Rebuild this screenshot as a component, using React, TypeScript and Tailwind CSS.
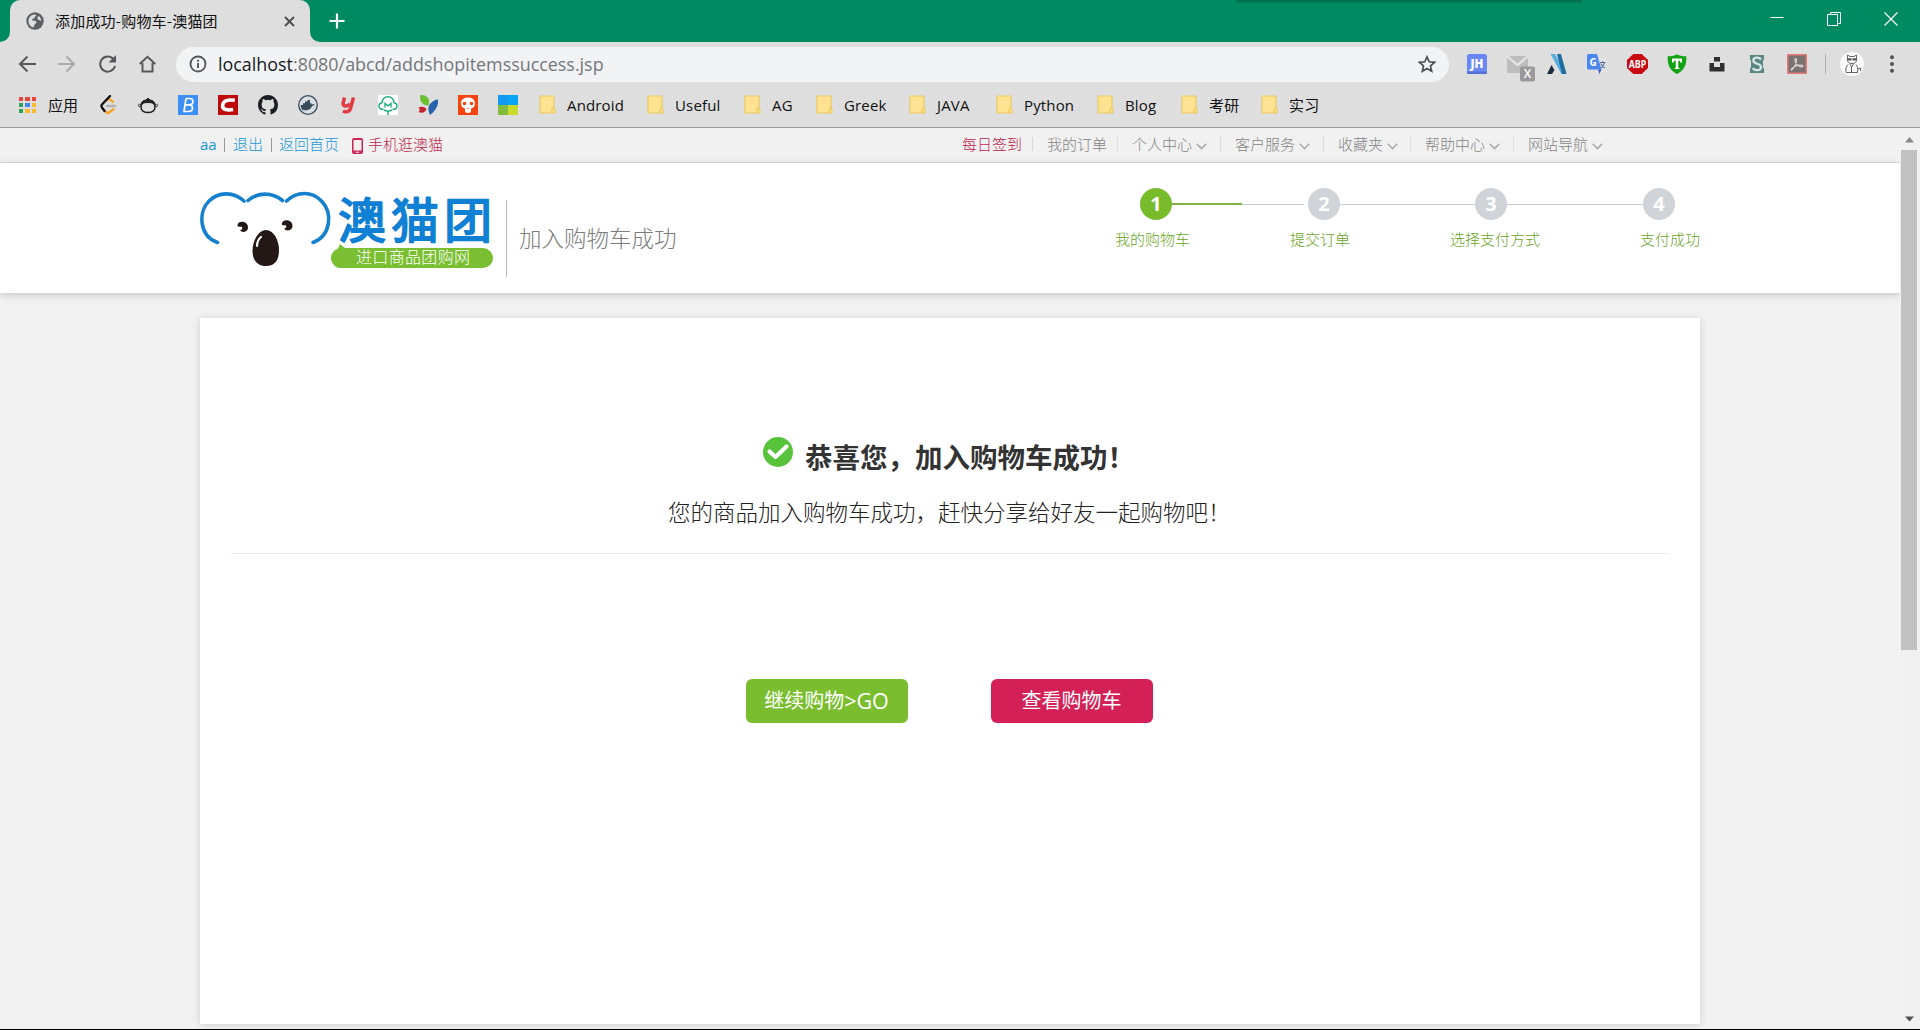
import React from "react";

const cjk = "font-['Noto_Sans_CJK_SC',sans-serif]";
const ui = "font-['Open_Sans','Noto_Sans_CJK_SC',sans-serif]";

function TabStrip() {
  return (
    <div className="relative flex h-[42px] w-full shrink-0 bg-[#008a62]">
      <div className="absolute left-[1236px] top-0 h-[4px] w-[346px] bg-gradient-to-b from-[#006c4d] to-[#008a62]" />
      <svg className="w-[10px] self-end" height="10" viewBox="0 0 10 10"><path d="M10 0V10H0A10 10 0 0 0 10 0Z" fill="#dedede" /></svg>
      <div className="flex w-[300px] items-center rounded-t-[10px] bg-[#dedede] pl-4">
        <svg width="18" height="18" viewBox="0 0 18 18">
          <circle cx="9" cy="9" r="8.7" fill="#5c6166" />
          <path d="M8.500 2.500c2 .2 2 1.200.8 1.900-1 .6-.6 1.800-1.800 2.200-1 .4-1.700.7-1.200 1.600.8 1 3.300-.2 4 1.400.5 1.600-1.100 2-1.700 3-.6 1-.6 2.400-1.500 2.900C4 14.500 2.300 11.500 2.500 8.500 3 5 5.500 2.700 8.500 2.500Z" fill="#dedede" />
          <path d="M12.300 4c1.700 1 2.900 2.600 3.100 4.500-.8.400-1.600-.2-2.500-.4-1.600-.5-2-2.500-.6-4.100Z" fill="#dedede" />
        </svg>
        <span className={`${cjk} ml-[11px] w-[229px] whitespace-nowrap text-[15px] leading-5 tracking-[0.2px] text-[#111]`}>添加成功-购物车-澳猫团</span>
        <svg width="11" height="11" viewBox="0 0 11 11" stroke="#4c4f52" strokeWidth="1.900"><path d="M1 1l9 9M10 1l-9 9" /></svg>
      </div>
      <svg className="w-[10px] self-end" height="10" viewBox="0 0 10 10"><path d="M0 0V10H10A10 10 0 0 1 0 0Z" fill="#dedede" /></svg>
      <svg className="ml-[9px] mt-[13px]" width="16" height="16" viewBox="0 0 16 16" stroke="#fff" strokeWidth="2.200"><path d="M8 .5v15M.5 8h15" /></svg>
      <div className="ml-auto flex gap-[43px] pr-[22px] pt-[12px]">
        <svg width="14" height="14" viewBox="0 0 14 14" stroke="#fff"><path d="M.5 5.500h13" /></svg>
        <svg width="14" height="14" viewBox="0 0 14 14" stroke="#fff" fill="none"><path d="M.5 2.500h10v11H.5zM3.500 2.500v-2h10v11h-3" /></svg>
        <svg width="14" height="14" viewBox="0 0 14 14" stroke="#fff" strokeWidth="1.200"><path d="M.5 .5l13 13M13.500 .5l-13 13" /></svg>
      </div>
    </div>
  );
}

function ExtensionIcons() {
  return (
    <div className="flex items-center gap-5">
      <svg width="20" height="20" viewBox="0 0 20 20"><rect width="20" height="20" rx="2.500" fill="#6b87f5" /><rect y="17.500" width="20" height="2.500" rx="1.200" fill="#556fd6" /><text x="10" y="14.200" textAnchor="middle" fontSize="11.500" fontWeight="800" fill="#fff" fontFamily="Open Sans">JH</text></svg>
      <svg className="-my-2 -mr-[8px]" width="28" height="36" viewBox="0 0 28 36"><path d="M0 10h21v17H0z" fill="#bdbdbd" /><path d="M0 10l10.500 9L21 10" stroke="#e6e6e6" strokeWidth="2.200" fill="none" /><rect x="13" y="20.500" width="15" height="15" rx="2" fill="#999" /><text x="20.500" y="32" textAnchor="middle" fontSize="12" fontWeight="600" fill="#fff" fontFamily="Open Sans">X</text></svg>
      <svg width="20" height="20" viewBox="0 0 20 20"><path d="M3.500 0H8l11 20h-4.500z" fill="#58ace0" /><path d="M10 0h4l5.500 20h-4.500z" fill="#1f6e9e" /><path d="M4.500 11l3 5L5 20H0z" fill="#1b2c40" /></svg>
      <svg width="20" height="20" viewBox="0 0 20 20"><path d="M9 4h10v15h-7z" fill="#e4e4e4" /><path d="M1.500 0H10l4.500 15.500H1.500A1.500 1.500 0 0 1 0 14V1.500A1.500 1.500 0 0 1 1.500 0Z" fill="#4a86ee" /><path d="M11 15.500h3.500L12.500 20z" fill="#2c5cb8" /><text x="6" y="11.500" textAnchor="middle" fontSize="10" fontWeight="700" fill="#fff" fontFamily="Open Sans">G</text><path d="M13 8.500h5.500M15.700 7v1.500M17.500 9c-.4 2.500-2 4-3.500 5M14 9.500c.6 2 2 3.500 4 4.500" stroke="#5f7391" strokeWidth="1.200" fill="none" /></svg>
      <svg width="21" height="20" viewBox="0 0 21 20"><path d="M6.300 0h8.400L21 6v8l-6.300 6H6.300L0 14V6z" fill="#c90a10" /><text x="1.700" y="13.900" fontSize="10.500" fontWeight="700" fill="#fff" fontFamily="Open Sans" textLength="17.600" lengthAdjust="spacingAndGlyphs">ABP</text></svg>
      <svg className="-ml-[1px]" width="20" height="20" viewBox="0 0 20 20"><path d="M10 .5c3 1.400 6 1.800 9.300 1.800C19.800 10 17.500 16.500 10 20 2.500 16.500.2 10 .7 2.300 4 2.300 7 1.900 10 .5Z" fill="#12a312" /><path d="M5 4.500h10v4h-1.500l-.7-1.700h-1.600v6.700l1.200.5v1H7.600v-1l1.200-.5V6.800H7.200L6.500 8.500H5z" fill="#fff" /></svg>
      <svg width="20" height="20" viewBox="0 0 20 20" fill="#2c2e30"><path d="M7 3h6v4.500H7zM2.500 9H7v4h6V9h4.500v8.500h-15z" /></svg>
      <svg width="20" height="20" viewBox="0 0 20 20"><path d="M3 1h14v5h-1v8h1v5H3v-5h1V6H3z" fill="#5b8783" /><path d="M14 5.500C13 4 11.800 3.700 10 3.700c-2.200 0-3.700 1-3.700 2.800C6.300 10.500 14 9 14 13c0 2-1.700 3.200-4 3.200-1.900 0-3.400-.6-4.300-2" stroke="#d5e5e3" strokeWidth="2.300" fill="none" /></svg>
      <svg width="20" height="20" viewBox="0 0 20 20"><rect x=".75" y=".75" width="18.500" height="18.500" fill="#7a726f" stroke="#df7a78" strokeWidth="1.500" /><path d="M4.500 16c2-1 4.500-5.500 5-9 .2-3-2-3-1.600-.5.600 3.500 4 6.500 7.200 6.300 1.500-.3.800-1.600-1-1.600-3.500 0-7 1.500-9 3.300-1 1-.9 1.700-.6 1.500Z" fill="none" stroke="#dad5d3" strokeWidth="1.200" /></svg>
    </div>
  );
}

function Toolbar() {
  const nav = { fill: "none", stroke: "#55585c", strokeWidth: 2 };
  return (
    <div className="flex h-[44px] w-full shrink-0 items-center bg-[#dedede] pl-[18px]">
      <svg className="mr-[22px]" width="18" height="18" viewBox="0 0 18 18" {...nav}><path d="M18 9H2M9.500 1.500L2 9l7.500 7.500" /></svg>
      <svg className="mr-[22px]" width="18" height="18" viewBox="0 0 18 18" {...nav} stroke="#a9abad"><path d="M0 9h16M8.500 1.500L16 9l-7.500 7.500" /></svg>
      <svg className="mr-[22px]" width="19" height="18" viewBox="0 0 19 18" {...nav}><path d="M15.500 4.300A7.500 7.500 0 1 0 17 11" /><path d="M18 0v7.500h-7.500z" fill="#55585c" stroke="none" /></svg>
      <svg className="mr-[20px]" width="17" height="18" viewBox="0 0 17 18" {...nav}><path d="M3.500 8v8.500h10V8M.7 9L8.500 1.800 16.300 9" /></svg>
      <div className="flex h-[35px] w-[1273px] shrink-0 items-center rounded-full bg-[#f1f3f4] pl-[13px]">
        <svg width="18" height="18" viewBox="0 0 18 18" fill="none" stroke="#55585c" strokeWidth="1.900"><circle cx="9" cy="9" r="7.500" /><path d="M9 8v5M9 4.800v1.900" /></svg>
        <span className={`${ui} ml-[11px] w-[1200px] whitespace-nowrap text-[17.900px] leading-6 text-[#74777b]`}><span className="text-[#17191c]">localhost</span>:8080/abcd/addshopitemssuccess.jsp</span>
        <svg width="18" height="18" viewBox="0 0 18 18" fill="none" stroke="#4d5054" strokeWidth="1.700"><path d="M9 1.800l2.200 5 5.400.5-4.100 3.600 1.200 5.300L9 13.400l-4.700 2.800 1.200-5.300L1.400 7.300l5.400-.5z" /></svg>
      </div>
      <div className="ml-[18px]"><ExtensionIcons /></div>
      <div className="ml-[18px] h-[20px] w-px bg-[#b0b0b0]" />
      <svg className="ml-[14px]" width="24" height="24" viewBox="0 0 24 24"><circle cx="12" cy="12" r="12" fill="#fafafa" /><path d="M7.500 7V3l2.500 1.500h4L16.500 3v4c.5 3-1.500 4.500-4.500 4.500S7 10 7.500 7ZM8 12.500c-2 2-2.500 4.500-2 8M16 12.500c1.500 1.500 2 4 1.500 8M10 12l1.500 3L13.500 12M11.500 15v5.500M6 20.500h12M18 17l2.500-1v3" stroke="#666" strokeWidth="1" fill="none" /><path d="M8 6.300h3.500v2.200H8zM12.500 6.300H16v2.200h-3.500z" fill="#555" /></svg>
      <svg className="ml-[26px]" width="4" height="18" viewBox="0 0 4 18" fill="#4f5256"><circle cx="2" cy="2.300" r="2" /><circle cx="2" cy="9" r="2" /><circle cx="2" cy="15.700" r="2" /></svg>
    </div>
  );
}

const folders = [
  { name: "Android", w: "w-[108px]" },
  { name: "Useful", w: "w-[97px]" },
  { name: "AG", w: "w-[72px]" },
  { name: "Greek", w: "w-[93px]" },
  { name: "JAVA", w: "w-[87px]" },
  { name: "Python", w: "w-[101px]" },
  { name: "Blog", w: "w-[84px]" },
  { name: "考研", w: "w-[80px]" },
  { name: "实习", w: "w-[80px]" },
];

const dots = ["#e8453c", "#e8453c", "#e8453c", "#2fa355", "#4385f4", "#f9b928", "#2fa355", "#f9b928", "#f9b928"];

function BookmarkBar() {
  return (
    <div className="flex h-[42px] w-full shrink-0 items-center border-b border-[#9b9b9b] bg-[#dedede] pb-[3px] pl-[19px]">
      <div className="grid w-[17px] grid-cols-3 gap-[2px]">
        {dots.map((c, i) => <span key={i} className="h-[4.300px] w-[4.300px]" style={{ background: c }} />)}
      </div>
      <span className={`${cjk} ml-[12px] w-[50px] text-[15px] leading-5 text-[#111]`}>应用</span>
      <div className="flex w-[442px] gap-5">
        <svg width="20" height="20" viewBox="0 0 20 20" fill="none" strokeWidth="2.300" strokeLinecap="round"><path d="M8 5.500l3-1.700 4 3M6 15l4 3.300 5.500-4" stroke="#f5a623" /><path d="M9 11h8" stroke="#b3b3b3" /><path d="M12 1L4 9.500c-.8 1-.8 2 0 3L6.500 16" stroke="#111" /></svg>
        <svg width="20" height="20" viewBox="0 0 20 20" fill="none" stroke="#222"><path d="M3 12c0-3.500 3-5.500 7-5.500s7 2 7 5.500-3 5.500-7 5.500-7-2-7-5.500Z" strokeWidth="1.500" /><path d="M3 9c.5-2.500 3-4 5-4l2-2 2 2c2 0 4.500 1.500 5 4-4-2-10-2-14 0Z" fill="#222" /><circle cx="1.700" cy="10.500" r="1.200" /><circle cx="18.300" cy="10.500" r="1.200" /></svg>
        <svg width="20" height="20" viewBox="0 0 20 20"><path fill="#3d8ff5" d="M0 0h20v20H0z" /><path d="M8 3.500L6 16.500h4c3 0 4.500-1.500 4.500-3.500S13 9.800 11 9.800c2.500 0 4-1.300 4-3.300s-1.500-3-3.500-3H8M7.300 9.800H11" fill="none" stroke="#fff" strokeWidth="1.700" /></svg>
        <svg width="20" height="20" viewBox="0 0 20 20"><path fill="#bd0a0d" d="M0 0h20v20H0z" /><path d="M16.800 5.300C10 4.200 5 5.500 4.600 10.500c-.2 4.300 5 5 10.600 4" fill="none" stroke="#fff" strokeWidth="3.500" /></svg>
        <svg width="20" height="20" viewBox="0 0 16 16" fill="#1b1f23"><path d="M8 0C3.580 0 0 3.580 0 8c0 3.540 2.290 6.530 5.470 7.590.4.070.55-.17.55-.38 0-.19-.01-.82-.01-1.490-2.010.37-2.530-.49-2.690-.94-.09-.23-.48-.94-.82-1.130-.28-.15-.68-.52-.01-.53.63-.01 1.080.58 1.230.82.72 1.210 1.870.87 2.330.66.07-.52.28-.87.51-1.070-1.780-.2-3.640-.89-3.640-3.950 0-.87.31-1.590.82-2.150-.08-.2-.36-1.020.08-2.120 0 0 .67-.21 2.200.82a7.600 7.600 0 0 1 4 0c1.530-1.040 2.200-.82 2.200-.82.44 1.100.16 1.920.08 2.120.51.56.82 1.270.82 2.150 0 3.070-1.870 3.750-3.650 3.950.29.25.54.73.54 1.480 0 1.070-.01 1.930-.01 2.200 0 .21.15.46.55.38A8.010 8.010 0 0 0 16 8c0-4.420-3.580-8-8-8Z" /></svg>
        <svg width="20" height="20" viewBox="0 0 20 20"><circle cx="10" cy="10" r="9.300" fill="#d7dde0" stroke="#394d5c" strokeWidth="1.300" /><path d="M2.800 10H5V8.200h2V6.500h2.500V5h2.500v3.200h1.500V9.600c1-.6 2-.5 3.200 0-.7 1-1.500 1.400-2.600 1.400-1.600 3.500-4 4.300-7 4.300-3.300 0-4.500-2.200-4.300-5.300Z" fill="#394d5c" /></svg>
        <svg width="20" height="20" viewBox="0 0 20 20" fill="none" stroke="#e23a46" strokeWidth="3.500"><path d="M6.500 2.500L5 8.500c-.5 3.500 5.500 3 7 0M15.500 2.500l-3 11c-1 3.500-5 4-7.500 2.500" /></svg>
        <svg width="20" height="20" viewBox="0 0 20 20"><path fill="#fff" d="M0 0h20v20H0z" /><path d="M5.500 14.500C2 14.500 1 12.800 1 11c0-2 1.500-3 3-3.200C4.500 4 7 1.700 10 1.700S15.500 4 16 7.800c1.500.2 3 1.200 3 3.200 0 1.800-1 3.500-4.500 3.500M7 12.500V8.500l3 2.300 3-2.300v4M6 15l4 1.500 4-1.500M10 16v4" fill="none" stroke="#1bb079" strokeWidth="1.400" /></svg>
        <svg width="20" height="20" viewBox="0 0 20 20"><path d="M2.500 0C9-.3 12.500 4 10.500 10.500 4.500 10.500 1 6.500 2.500 0Z" fill="#6abf2e" /><path d="M20 4.500c.8 6-2.500 11.500-8 15.500-2.500-5-2-8.500.5-11.500C14.500 6.300 17 4.500 20 4.500Z" fill="#2a62ab" /><path d="M.5 12.500c3-1.500 6-1 8 1.500C7.500 17.500 4 18.500.5 17c1.500-1.500 1.500-3 0-4.500Z" fill="#c5232d" /></svg>
        <svg width="20" height="20" viewBox="0 0 20 20"><path fill="#f6440f" d="M0 0h20v20H0z" /><path d="M10 2.500c4.500 0 7 2.500 7 6 0 3-2 4.500-4 5v2.500c0 1-1 2-3 2s-3-1-3-2v-2.500c-2-.5-4-2-4-5 0-3.500 2.500-6 7-6Z" fill="#fff" /><circle cx="6.500" cy="8.500" r="1.800" fill="#f6440f" /><circle cx="13.500" cy="8.500" r="1.800" fill="#f6440f" /><path d="M9 13h2l-1 1.500z" fill="#f6440f" /></svg>
        <svg width="20" height="20" viewBox="0 0 20 20"><path fill="#109bf0" d="M0 0h20v10H0z" /><path fill="#0aa5f5" d="M10 0h10v10H10z" /><path fill="#84bd3e" d="M0 10h10v10H0z" /><path fill="#c8da2b" d="M10 10h10v10H10z" /></svg>
      </div>
      {folders.map((f) => (
        <div key={f.name} className={`${f.w} ${ui} flex shrink-0 items-center gap-[11px] whitespace-nowrap text-[15px] leading-5 text-[#111]`}>
          <svg className="-ml-px shrink-0" width="17" height="20" viewBox="0 0 17 20"><path d="M1 1h14v11.500l1 2.500v3H1z" fill="#fde391" stroke="#ecca62" strokeWidth="1.200" /><path d="M13 18v-4l2-1.500" fill="none" stroke="#e6bf4b" /></svg>
          <span className="tracking-[0.150px]">{f.name}</span>
        </div>
      ))}
    </div>
  );
}

const menus = [
  { name: "我的订单", w: "w-[70px]", arrow: false },
  { name: "个人中心", w: "w-[88px]", arrow: true },
  { name: "客户服务", w: "w-[88px]", arrow: true },
  { name: "收藏夹", w: "w-[72px]", arrow: true },
  { name: "帮助中心", w: "w-[88px]", arrow: true },
  { name: "网站导航", w: "w-[88px]", arrow: true },
];

function TopLinks() {
  return (
    <div className={`${cjk} flex h-[35px] w-full shrink-0 items-center whitespace-nowrap border-b border-[#dcdcdc] bg-[#f1f1f1] pb-[3px] pl-[200px] text-[15px] font-light leading-5 text-[#1697d4]`}>
      <span className={`${ui} w-[24px] text-[15px] font-normal`}>aa</span>
      <span className="mt-[2px] h-[14px] w-px bg-[#999]" />
      <span className="ml-[8px] w-[38px]">退出</span>
      <span className="mt-[2px] h-[14px] w-px bg-[#999]" />
      <span className="ml-[7px] w-[73px]">返回首页</span>
      <svg width="11" height="16" viewBox="0 0 11 16" className="mt-[4px]"><path fillRule="evenodd" fill="#cf2357" d="M2 0h7a2 2 0 0 1 2 2v12a2 2 0 0 1-2 2H2a2 2 0 0 1-2-2V2a2 2 0 0 1 2-2ZM1.500 2v10.500h8V2zM4 13.700v1h3v-1z" /></svg>
      <span className="ml-[5px] w-[594px] text-[#bb1f4e]">手机逛澳猫</span>
      <span className="w-[70px] text-[#bb1f4e]">每日签到</span>
      {menus.map((m) => (
        <React.Fragment key={m.name}>
          <span className="h-[14px] w-px bg-[#dadada]" />
          <div className={`ml-[14px] flex items-center text-[#858585] ${m.w}`}>
            <span>{m.name}</span>
            {m.arrow && <svg className="ml-[4px] mt-[5px]" width="11" height="7" viewBox="0 0 11 7" fill="none" stroke="#aaa" strokeWidth="1.500"><path d="M.7 .8l4.800 4.800L10.300 .8" /></svg>}
          </div>
        </React.Fragment>
      ))}
    </div>
  );
}

function Logo() {
  return (
    <svg width="296" height="92" viewBox="200 178 296 92" className="shrink-0">
      <g fill="none" stroke="#1581ce" strokeWidth="3.600" strokeLinecap="round">
        <path d="M244 201C234 192 219 191 209 201C198 212 199 236 217.500 242.500" />
        <path d="M248 200.500C258 192 272 192 282.500 200.500" />
        <path d="M286.500 201C297 191 312 191 321.500 201C333 213 331 236 313 242.500" />
      </g>
      <g fill="#231815">
        <path d="M266 230c7.500 0 13 10 13 20s-4 16-13 16-13.500-6-13.500-15.500S258.500 230 266 230Z" />
        <path d="M239 222.500c4-1.800 9 .3 9 5 0 4.500-6 6-8 2.500 2 0 2.800-1.500 2-3-1.200-1-3.500.5-4.500-1 0-1.500.5-2.500 1.500-3.500Z" />
        <path d="M283.500 221c4-2 9 .3 9 5 0 4.500-6.500 6-8.500 2.500 2 0 2.800-1.500 2-3-1.200-1-3.500.5-4.200-1 0-1.500.7-2.500 1.700-3.500Z" />
      </g>
      <path d="M257 246c0-4 1.500-7 4-9" fill="none" stroke="#fff" strokeWidth="2.200" strokeLinecap="round" />
      <text x="338" y="238" textLength="154" fontSize="48" fill="#0f80d3" stroke="#0f80d3" strokeWidth="1.800" strokeLinejoin="round" fontFamily="Noto Sans CJK SC">澳猫团</text>
      <path d="M340 244l5 4h138a10 10 0 0 1 0 20H342a10 10 0 0 1-4-19.500z" fill="#7abf31" />
      <text x="356" y="263" textLength="114" fontSize="16" fill="#fff" fontWeight="300" fontFamily="Noto Sans CJK SC">进口商品团购网</text>
    </svg>
  );
}

function Steps() {
  const ball = `${ui} flex h-8 w-8 items-center justify-center rounded-full text-[20px] font-bold leading-8 text-white`;
  return (
    <div className={`${cjk} w-[640px] shrink-0`}>
      <div className="flex items-center pl-[25px] pt-[25px]">
        <span className={`${ball} bg-[#78bc2c]`}>1</span>
        <span className="h-[1.500px] w-[70px] bg-[#7fb243]" />
        <span className="mr-[4px] h-px w-[62px] bg-[#cbced1]" />
        <span className={`${ball} bg-[#d0d3d7]`}>2</span>
        <span className="h-px w-[135px] bg-[#cbced1]" />
        <span className={`${ball} bg-[#d0d3d7]`}>3</span>
        <span className="h-px w-[136px] bg-[#cbced1]" />
        <span className={`${ball} bg-[#d0d3d7]`}>4</span>
      </div>
      <div className="mt-[9px] flex whitespace-nowrap text-[15px] font-light leading-5 text-[#6aa326]">
        <span className="w-[175px]">我的购物车</span>
        <span className="w-[160px]">提交订单</span>
        <span className="w-[190px]">选择支付方式</span>
        <span>支付成功</span>
      </div>
    </div>
  );
}

function Header() {
  return (
    <div className="relative flex h-[130px] w-full shrink-0 bg-white pl-[200px] shadow-[0_2px_8px_rgba(0,0,0,0.18)]">
      <div className="pt-[15px]"><Logo /></div>
      <div className="ml-[10px] mt-[37px] h-[77px] w-px bg-[#bdbdbd]" />
      <h1 className={`${cjk} ml-[12px] mt-[58px] w-[596px] text-[22.500px] font-light leading-[32px] text-[#7c7c7c]`}>加入购物车成功</h1>
      <Steps />
    </div>
  );
}

function SuccessCard() {
  const button = `${ui} flex h-[44px] w-[162px] items-center justify-center rounded-[6px] text-[20px] leading-6 text-white`;
  return (
    <div className={`${cjk} ml-[200px] mt-[25px] flex h-[706px] w-[1500px] shrink-0 flex-col items-center bg-white shadow-[0_1px_8px_rgba(0,0,0,0.15)]`}>
      <div className="mt-[119px] flex w-[374px]">
        <svg width="30" height="30" viewBox="0 0 30 30"><circle cx="15" cy="15" r="15" fill="#56c33a" /><path d="M6.500 14.500l6 5.500 11-10.500" fill="none" stroke="#fff" strokeWidth="4.200" strokeLinecap="round" strokeLinejoin="round" /></svg>
        <h2 className="-mt-[1px] ml-[12px] whitespace-nowrap text-[27.500px] font-bold leading-[40px] text-[#333]">恭喜您，加入购物车成功！</h2>
      </div>
      <p className="mt-[17px] w-[564px] whitespace-nowrap text-[22.500px] font-light leading-[36px] text-[#222]">您的商品加入购物车成功，赶快分享给好友一起购物吧！</p>
      <div className="ml-px mt-[24px] h-px w-[1439px] bg-[#ececec]" />
      <div className="mr-[2px] mt-[125px] flex gap-[83px]">
        <button className={`${button} bg-[#7abe2f]`}>继续购物<span className="text-[21.500px]">&gt;GO</span></button>
        <button className={`${button} bg-[#d32057]`}>查看购物车</button>
      </div>
    </div>
  );
}

function Scrollbar() {
  return (
    <div className="flex w-[20px] flex-col items-center bg-[#f1f1f1] pr-[2px]">
      <svg className="mt-[9px]" width="9" height="6" viewBox="0 0 9 6"><path d="M4.500 0L9 5.500H0z" fill="#8a8a8a" /></svg>
      <div className="mt-[7px] h-[500px] w-[16px] bg-[#c1c1c1]" />
      <svg className="mb-[7px] mt-auto" width="9" height="6" viewBox="0 0 9 6"><path d="M0 .5h9L4.500 5.500z" fill="#505050" /></svg>
    </div>
  );
}

export default function App() {
  return (
    <div className="flex h-[1030px] w-[1920px] flex-col overflow-hidden border-b border-black bg-[#f1f1f1]">
      <TabStrip />
      <Toolbar />
      <BookmarkBar />
      <div className="flex min-h-0 flex-1">
        <div className="flex w-[1900px] flex-col overflow-hidden bg-[#f2f2f2]">
          <TopLinks />
          <Header />
          <SuccessCard />
        </div>
        <Scrollbar />
      </div>
    </div>
  );
}
